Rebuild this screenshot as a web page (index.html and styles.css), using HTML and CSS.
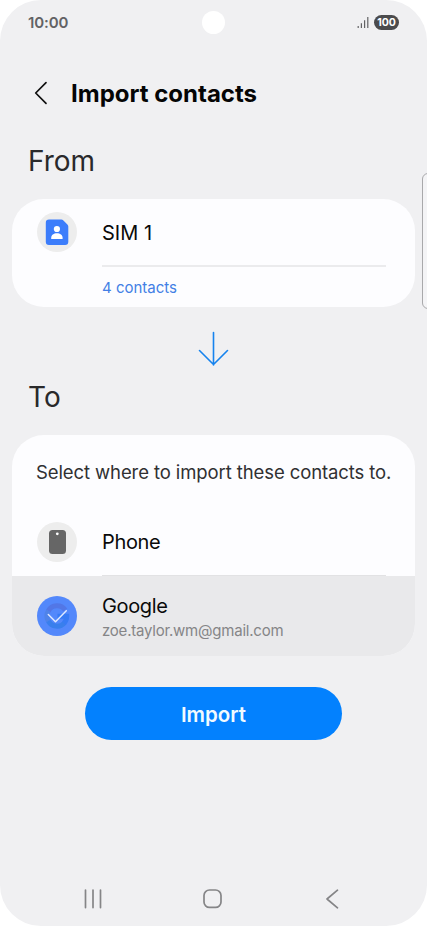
FILE: index.html
```html
<!DOCTYPE html>
<html lang="en">
<head>
  <meta charset="UTF-8" />
  <title>Import contacts</title>
  <link rel="stylesheet" href="styles.css">
</head>
<body>

  <div class="screen">
    <div class="status-bar">
      <span class="time">10:00</span>
      <span class="camera"></span>
      <div class="status-icons">
        <svg class="signal" width="12" height="13" viewBox="0 0 12 13">
          <path d="M1.2 9.9V12M4.4 7.2V12M7.6 4.2V12M10.8 1V12" />
        </svg>
        <span class="battery">100</span>
      </div>
    </div>

    <header class="header">
      <svg class="back" width="14" height="24" viewBox="0 0 14 24">
        <path d="M12 1.7 1.7 12 12 22.3" />
      </svg>
      <h1>Import contacts</h1>
    </header>

    <h2><span>From</span></h2>
    <div class="card from-card">
      <div class="row sim-row">
        <span class="icon">
          <svg width="40" height="40" viewBox="0 0 40 40">
            <path fill="#3c7dfb" d="M12 7.5H24.3a3 3 0 0 1 2.1.9l4 4a3 3 0 0 1 .9 2.1V29.8a3.2 3.2 0 0 1-3.2 3.2H12a3.2 3.2 0 0 1-3.2-3.2V10.7a3.2 3.2 0 0 1 3.2-3.2Z" />
            <circle cx="19.9" cy="17" r="3.1" fill="#fff" />
            <path fill="#fff" d="M14.2 27v-1.2c0-2.9 2.6-4.6 5.7-4.6s5.7 1.7 5.7 4.6V27Z" />
          </svg>
        </span>
        <span class="name sim-name">SIM 1</span>
      </div>
      <div class="line"></div>
      <div class="count"><span>4 contacts</span></div>
    </div>

    <div class="arrow">
      <svg width="32" height="36" viewBox="0 0 32 36">
        <path d="M15.5 1.5V34M1.5 19.5 15.5 33.5 29.5 19.5" />
      </svg>
    </div>

    <h2><span>To</span></h2>
    <div class="card to-card">
      <p class="hint">Select where to import these contacts to.</p>
      <div class="row phone-row">
        <span class="icon">
          <svg width="40" height="40" viewBox="0 0 40 40">
            <rect x="12" y="8" width="17" height="24" rx="3.5" fill="#666" />
            <circle cx="20.3" cy="11.8" r="1.4" fill="#fff" />
          </svg>
        </span>
        <span class="name">Phone</span>
      </div>
      <div class="line"></div>
      <div class="row google-row">
        <span class="icon checked">
          <svg width="40" height="40" viewBox="0 0 40 40" fill="none">
            <path stroke="#5277e6" stroke-width="5" d="M28.2 14A10 10 0 0 0 11.3 15" />
            <path stroke="#4f83e8" stroke-width="5" d="M11.3 15A10 10 0 0 0 11.3 25" />
            <path stroke="#397fec" stroke-width="5" d="M11.3 25A10 10 0 0 0 27.5 26.8" />
            <path stroke="#377bf5" stroke-width="5" d="M20.5 20.3H29.7A10 10 0 0 1 27 27.2" />
            <path stroke="#dfe9ff" stroke-width="1.5" stroke-linecap="round" stroke-linejoin="round" d="M11.3 18.5 18.5 25.7 29.3 14.8" />
          </svg>
        </span>
        <div class="account">
          <span class="name google-name">Google</span>
          <span class="email">zoe.taylor.wm@gmail.com</span>
        </div>
      </div>
    </div>

    <button class="import-btn"><span>Import</span></button>

    <nav class="nav-bar">
      <svg width="20" height="20" viewBox="0 0 20 20">
        <path d="M2.5 1V18.6M10 1V18.6M17.5 1V18.6" />
      </svg>
      <svg width="20" height="20" viewBox="0 0 20 20">
        <rect x="1" y="1" width="17" height="17.4" rx="5.5" />
      </svg>
      <svg width="20" height="20" viewBox="0 0 20 20">
        <path d="M15.5 1.2 5 10 15.5 18.8" />
      </svg>
    </nav>

    <div class="edge-panel"></div>
  </div>

</body>
</html>
```
FILE: styles.css
```css
body { margin: 0; background: white; font-family: Inter, sans-serif; }
.screen {
  position: relative; overflow: hidden; box-sizing: border-box;
  width: 427px; height: 926px;
  display: flex; flex-direction: column;
  background-color: #f0f0f2; border-radius: 41px;
}

.status-bar {
  display: grid; grid-template-columns: 1fr 23px 1fr; align-items: center;
  height: 44px; padding: 0 28px;
}
.time { font-size: 15px; font-weight: 600; letter-spacing: -0.1px; color: #626264; }
.camera { width: 23px; height: 23px; border-radius: 50%; background: white; }
.status-icons { display: flex; align-items: center; justify-content: flex-end; gap: 5px; }
.signal path { stroke: #626264; stroke-width: 1.2; fill: none; }
.battery {
  width: 25px; height: 15px; border-radius: 8px; background: #4b4b4d;
  color: white; font-size: 10.5px; line-height: 15px; font-weight: 700; text-align: center;
}

.header { display: flex; align-items: center; height: 98px; padding-left: 34px; }
.back path { fill: none; stroke: #111; stroke-width: 1.7; stroke-linecap: round; stroke-linejoin: round; }
h1 { margin: 0 0 0 23px; font-size: 24px; font-weight: 700; color: #050505; }

h2 {
  display: flex; align-items: center; margin: 0 0 0 28px; height: 38px; padding-bottom: 19px;
  font-size: 28px; font-weight: 400; color: #29292b;
}

.card { width: 403px; margin: 0 auto; background: #fdfdff; border-radius: 32px; overflow: hidden; }
.from-card { height: 108px; }
.row { display: flex; align-items: center; padding-left: 25px; }
.icon { width: 40px; height: 40px; margin-right: 25px; border-radius: 50%; background: #ededed; }
.icon svg { display: block; }
.checked { background: #5388fb; }
.name { font-size: 20px; letter-spacing: -0.35px; color: #0a0a0a; white-space: nowrap; }
.sim-name { padding-top: 2px; letter-spacing: 0; }
.sim-row { height: 66px; }
.line { height: 1px; margin: 0 29px 0 90px; background: #e2e2e4; }
.from-card .line { height: 2px; background: #ebebed; }
.count { padding: 12px 0 0 90px; font-size: 15px; line-height: 18px; color: #437fe5; }

.arrow { display: flex; justify-content: center; box-sizing: border-box; height: 71px; padding-top: 24px; }
.arrow path { fill: none; stroke: #1683ee; stroke-width: 1.6; stroke-linecap: round; stroke-linejoin: round; }

.to-card { height: 221px; }
.hint { margin: 0; padding: 0 0 0 24px; height: 74px; line-height: 74px; font-size: 18.5px; letter-spacing: -0.1px; color: #303032; white-space: nowrap; }
.phone-row { height: 66px; }
.google-row { height: 80px; background: #e9e9eb; }
.account { display: flex; flex-direction: column; padding-top: 1px; }
.email { font-size: 15px; line-height: 21px; letter-spacing: -0.22px; color: #858587; }
.google-name { line-height: 28px; }

.import-btn {
  width: 257px; height: 53px; margin: 31px auto 0; padding: 0;
  border: none; border-radius: 27px; background: #0381fe;
  color: #f2faff; font-family: inherit; font-size: 20.5px; font-weight: 600;
}
.import-btn span { position: relative; top: 1px; }

.nav-bar { display: flex; justify-content: space-between; margin: auto 85px 17px 83px; }
.nav-bar svg { fill: none; stroke: #858587; stroke-width: 1.7; stroke-linecap: round; stroke-linejoin: round; }

/* handle hanging over the right side of the screen */
.edge-panel {
  position: absolute; top: 173px; right: -7px; width: 10px; height: 134px;
  border: 1px solid #a9a9ab; border-radius: 6px; background: #f4f4f6;
}
```
